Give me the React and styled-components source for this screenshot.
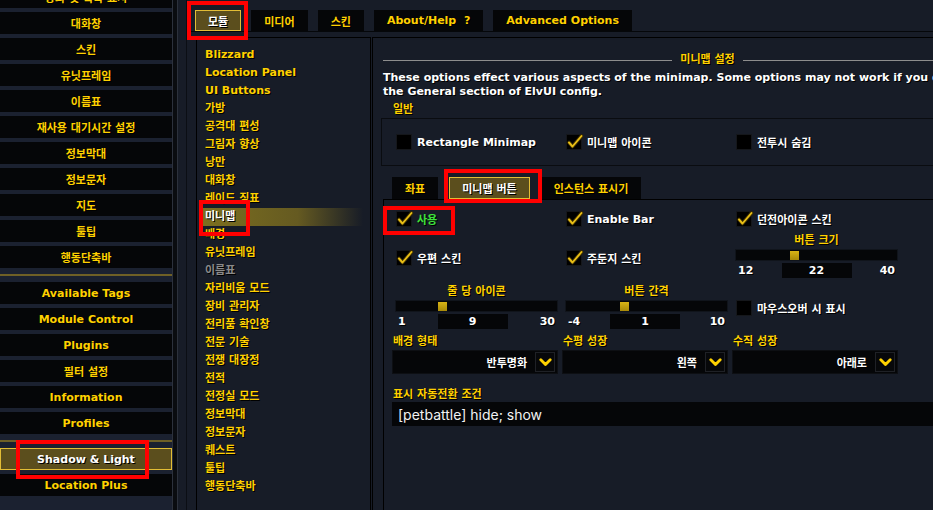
import styled, { createGlobalStyle } from "styled-components";

const GOLD = "#ffd100";
const NAVY = "#171c27";
const INK = "#050608";

const GlobalStyle = createGlobalStyle`
  html, body {
    margin: 0;
    padding: 0;
    background: ${NAVY};
    overflow: hidden;
  }
`;

const Screen = styled.div`
  position: relative;
  width: 933px;
  height: 510px;
  overflow: hidden;
  display: flex;
  background: ${NAVY};
  font-family: "DejaVu Sans", "Noto Sans CJK KR", sans-serif;
  font-weight: 700;
  font-size: 11px;
  color: ${GOLD};
  text-shadow: 1px 1px 0 #000;
`;

/* ---------- left category list ---------- */

const Sidebar = styled.nav`
  width: 172px;
  flex-shrink: 0;
  display: flex;
  flex-direction: column;
  gap: 4px;
  margin-top: -14px;
  background: #1b2130;
`;

const NavButton = styled.div`
  flex-shrink: 0;
  height: 22px;
  box-sizing: border-box;
  display: flex;
  align-items: center;
  justify-content: center;
  white-space: nowrap;
  background: ${(p) => (p.$active ? "#5b4e1d" : INK)};
  border: 1px solid ${(p) => (p.$active ? "#e2bd35" : INK)};
  color: ${(p) => (p.$active ? "#fff" : GOLD)};
`;

const NavSeparator = styled.div`
  flex-shrink: 0;
  height: 2px;
  margin: 2px 0;
  background: #6f6026;
`;

const ScrollTrack = styled.div`
  width: 4px;
  flex-shrink: 0;
  margin-right: 8px;
  background: #0a0c10;
  border-left: 1px solid #2c313c;
  border-right: 1px solid #2c313c;
`;

/* ---------- main frame ---------- */

const MainFrame = styled.main`
  flex: 1;
  min-width: 0;
  display: flex;
  flex-direction: column;
  border-left: 1px solid #0b0e14;
`;

const TabRow = styled.div`
  display: flex;
  gap: ${(p) => p.$gap}px;
  padding: ${(p) => p.$pad};
  border-bottom: ${(p) => (p.$line ? "1px solid #05070a" : "none")};
  margin-top: ${(p) => p.$top || 0}px;
`;

const Tab = styled.div`
  height: ${(p) => p.$h}px;
  box-sizing: border-box;
  padding: 0 12px;
  display: flex;
  align-items: center;
  white-space: nowrap;
  background: ${(p) => (p.$active ? "#5b4e1d" : INK)};
  border: 1px solid ${(p) => (p.$active ? "#e2bd35" : INK)};
  color: ${(p) => (p.$active ? "#fff" : GOLD)};
`;

const Body = styled.div`
  flex: 1;
  display: flex;
  margin-top: 5px;
  padding-left: 9px;
`;

const Tree = styled.ul`
  width: 175px;
  flex-shrink: 0;
  box-sizing: border-box;
  margin: 0;
  padding: 8px 0 0;
  list-style: none;
  border: 1px solid #000;
  border-bottom: none;
`;

const TreeItem = styled.li`
  width: 163px;
  margin-left: 3px;
  padding-left: 5px;
  box-sizing: border-box;
  height: 18px;
  line-height: 18px;
  white-space: nowrap;
  color: ${(p) => (p.$active ? "#fff" : p.$muted ? "#8a8a8a" : GOLD)};
  background: ${(p) =>
    p.$active
      ? "linear-gradient(90deg, #7d701f 0%, #655a21 60%, rgba(95, 85, 32, 0) 100%)"
      : "none"};
`;

const Content = styled.section`
  width: 670px;
  flex-shrink: 0;
  margin-left: 1px;
  box-sizing: border-box;
  padding: 13px 10px 0 10px;
  display: flex;
  flex-direction: column;
  border-left: 1px solid #000;
  border-top: 1px solid #000;
`;

const TitleRow = styled.div`
  display: flex;
  align-items: center;
  gap: 8px;
  height: 18px;
  line-height: 18px;
`;

const TitleLine = styled.div`
  flex: 1;
  height: 1px;
  background: #8d8d8d;
`;

const Description = styled.p`
  margin: 2px 0 0;
  font-size: 11px;
  line-height: 14px;
  color: #fff;
  white-space: nowrap;
`;

const GroupLabel = styled.div`
  margin-top: ${(p) => p.$top}px;
  padding-left: ${(p) => p.$indent}px;
  line-height: ${(p) => p.$lh}px;
`;

const GroupBox = styled.div`
  height: 48px;
  box-sizing: border-box;
  margin-left: -2px;
  padding-left: 10px;
  display: flex;
  align-items: center;
  border: 1px solid #0a0c10;
`;

const OptionGrid = styled.div`
  display: grid;
  grid-template-columns: repeat(3, 166px);
  grid-template-rows: ${(p) => p.$rows || "auto"};
  column-gap: 4px;
  row-gap: 2px;
`;

const InnerPanel = styled.div`
  flex: 1;
  padding: 7px 0 0 8px;
  border-left: 1px solid #000;
  border-top: 1px solid #000;
`;

/* ---------- widgets ---------- */

const CheckRow = styled.label`
  align-self: center;
  display: flex;
  align-items: center;
  gap: 5px;
  padding-left: 4px;
  white-space: nowrap;
  color: ${(p) => (p.$green ? "#3ee23e" : "#fff")};
`;

const Box = styled.span`
  position: relative;
  width: 16px;
  height: 16px;
  box-sizing: border-box;
  background: #000;
  border: 1px solid #15171b;
  flex-shrink: 0;
`;

const Tick = styled.svg`
  position: absolute;
  left: -1px;
  top: -2px;
`;

function CheckBox({ label, checked, green }) {
  return (
    <CheckRow $green={green}>
      <Box>
        {checked && (
          <Tick width="18" height="18" viewBox="0 0 18 18">
            <path d="M3 9.5 L6.5 13.5 L15.5 3" fill="none" stroke="#3b2d00" strokeWidth="3.6" strokeLinecap="round" strokeLinejoin="round" />
            <path d="M3 9.5 L6.5 13.5 L15.5 3" fill="none" stroke="#e9bf16" strokeWidth="1.9" strokeLinecap="round" strokeLinejoin="round" />
          </Tick>
        )}
      </Box>
      {label}
    </CheckRow>
  );
}

const SliderWrap = styled.div`
  width: 163px;
  margin-left: 3px;
`;

const SliderLabel = styled.div`
  text-align: center;
  line-height: 16px;
`;

const Track = styled.div`
  position: relative;
  height: 12px;
  box-sizing: border-box;
  background: ${INK};
  border: 1px solid #10141b;
`;

const Thumb = styled.div`
  position: absolute;
  top: 1px;
  width: 9px;
  height: 9px;
  background: linear-gradient(#d8b415, #a98a08);
`;

const SliderValues = styled.div`
  margin-top: 2px;
  height: 15px;
  padding: 0 3px;
  display: flex;
  align-items: center;
  justify-content: space-between;
  color: #fff;
`;

const ValueBox = styled.span`
  width: 70px;
  height: 15px;
  line-height: 15px;
  text-align: center;
  background: ${INK};
`;

function Slider({ label, min, max, value }) {
  const pct = (value - min) / (max - min);
  return (
    <SliderWrap>
      <SliderLabel>{label}</SliderLabel>
      <Track>
        <Thumb style={{ left: `calc(${pct * 100}% - ${pct * 9}px)` }} />
      </Track>
      <SliderValues>
        <span>{min}</span>
        <ValueBox>{value}</ValueBox>
        <span>{max}</span>
      </SliderValues>
    </SliderWrap>
  );
}

const FieldLabel = styled.div`
  line-height: 16px;
  padding-left: 1px;
`;

const SelectBox = styled.div`
  height: 24px;
  box-sizing: border-box;
  display: flex;
  align-items: center;
  justify-content: flex-end;
  gap: 8px;
  padding-right: 2px;
  background: ${INK};
  border: 1px solid #0d0f13;
  color: #fff;
`;

const ChevronButton = styled.span`
  width: 20px;
  height: 20px;
  box-sizing: border-box;
  display: flex;
  align-items: center;
  justify-content: center;
  border: 1px solid #1f2126;
  background: #07080a;
`;

function Dropdown({ label, value }) {
  return (
    <div>
      <FieldLabel>{label}</FieldLabel>
      <SelectBox>
        <span>{value}</span>
        <ChevronButton>
          <svg width="13" height="9" viewBox="0 0 13 9">
            <polyline points="1.8,1.8 6.5,6.6 11.2,1.8" fill="none" stroke={GOLD} strokeWidth="2.8" strokeLinecap="round" strokeLinejoin="round" />
          </svg>
        </ChevronButton>
      </SelectBox>
    </div>
  );
}

const EditBox = styled.div`
  height: 24px;
  width: 640px;
  box-sizing: border-box;
  padding-left: 6px;
  display: flex;
  align-items: center;
  background: ${INK};
  color: #f2f2f2;
  font-family: Inter, "Noto Sans", sans-serif;
  font-weight: 400;
  font-size: 14px;
  text-shadow: none;
`;

/* ---------- red markers drawn over the capture ---------- */

const Marker = styled.div`
  position: absolute;
  left: ${(p) => p.$x}px;
  top: ${(p) => p.$y}px;
  width: ${(p) => p.$w}px;
  height: ${(p) => p.$h}px;
  box-sizing: border-box;
  border: 4px solid #f00;
  pointer-events: none;
`;

const topCategories = [
  "강화 및 획득 표시",
  "대화창",
  "스킨",
  "유닛프레임",
  "이름표",
  "재사용 대기시간 설정",
  "정보막대",
  "정보문자",
  "지도",
  "툴팁",
  "행동단축바",
];

const extraCategories = [
  "Available Tags",
  "Module Control",
  "Plugins",
  "필터 설정",
  "Information",
  "Profiles",
];

const moduleTree = [
  "Blizzard",
  "Location Panel",
  "UI Buttons",
  "가방",
  "공격대 편성",
  "그림자 향상",
  "낭만",
  "대화창",
  "레이드 징표",
  "미니맵",
  "배경",
  "유닛프레임",
  "이름표",
  "자리비움 모드",
  "장비 관리자",
  "전리품 확인창",
  "전문 기술",
  "전쟁 대장정",
  "전적",
  "전정실 모드",
  "정보막대",
  "정보문자",
  "퀘스트",
  "툴팁",
  "행동단축바",
];

export default function App() {
  return (
    <>
      <GlobalStyle />
      <Screen>
        <Sidebar>
          {topCategories.map((c) => (
            <NavButton key={c}>{c}</NavButton>
          ))}
          <NavSeparator />
          {extraCategories.map((c) => (
            <NavButton key={c}>{c}</NavButton>
          ))}
          <NavSeparator />
          <NavButton $active>Shadow &amp; Light</NavButton>
          <NavButton>Location Plus</NavButton>
        </Sidebar>
        <ScrollTrack />

        <MainFrame>
          <TabRow $gap={10} $pad="10px 0 0 8px" $line>
            <Tab $h={21} $active>모듈</Tab>
            <Tab $h={21}>미디어</Tab>
            <Tab $h={21}>스킨</Tab>
            <Tab $h={21}>About/Help&nbsp;&nbsp;?</Tab>
            <Tab $h={21}>Advanced Options</Tab>
          </TabRow>

          <Body>
            <Tree>
              {moduleTree.map((m, i) => (
                <TreeItem key={i} $active={m === "미니맵"} $muted={i === 12}>
                  {m}
                </TreeItem>
              ))}
            </Tree>

            <Content>
              <TitleRow>
                <TitleLine />
                미니맵 설정
                <TitleLine />
              </TitleRow>
              <Description>
                These options effect various aspects of the minimap. Some options may not work if you disable Minimap in
                <br />
                the General section of ElvUI config.
              </Description>

              <GroupLabel $top={3} $lh={16} $indent={10}>일반</GroupLabel>
              <GroupBox>
                <OptionGrid>
                  <CheckBox label="Rectangle Minimap" />
                  <CheckBox label="미니맵 아이콘" checked />
                  <CheckBox label="전투시 숨김" />
                </OptionGrid>
              </GroupBox>

              <TabRow $gap={11} $pad="0 0 0 9px" $top={11}>
                <Tab $h={22}>좌표</Tab>
                <Tab $h={22} $active>미니맵 버튼</Tab>
                <Tab $h={22}>인스턴스 표시기</Tab>
              </TabRow>

              <InnerPanel>
                <OptionGrid $rows="24px 49px 48px 40px">
                  <CheckBox label="사용" checked green />
                  <CheckBox label="Enable Bar" checked />
                  <CheckBox label="던전아이콘 스킨" checked />

                  <CheckBox label="우편 스킨" checked />
                  <CheckBox label="주둔지 스킨" checked />
                  <Slider label="버튼 크기" min={12} max={40} value={22} />

                  <Slider label="줄 당 아이콘" min={1} max={30} value={9} />
                  <Slider label="버튼 간격" min={-4} max={10} value={1} />
                  <CheckBox label="마우스오버 시 표시" />

                  <Dropdown label="배경 형태" value="반투명화" />
                  <Dropdown label="수평 성장" value="왼쪽" />
                  <Dropdown label="수직 성장" value="아래로" />
                </OptionGrid>

                <GroupLabel $top={13} $lh={15} $indent={1}>
                  표시 자동전환 조건
                </GroupLabel>
                <EditBox>[petbattle] hide; show</EditBox>
              </InnerPanel>
            </Content>
          </Body>
        </MainFrame>

        <Marker $x={187} $y={1} $w={61} $h={39} />
        <Marker $x={16} $y={440} $w={133} $h={39} />
        <Marker $x={199} $y={200} $w={51} $h={36} />
        <Marker $x={444} $y={169} $w={98} $h={34} />
        <Marker $x={383} $y={206} $w={72} $h={29} />
      </Screen>
    </>
  );
}
